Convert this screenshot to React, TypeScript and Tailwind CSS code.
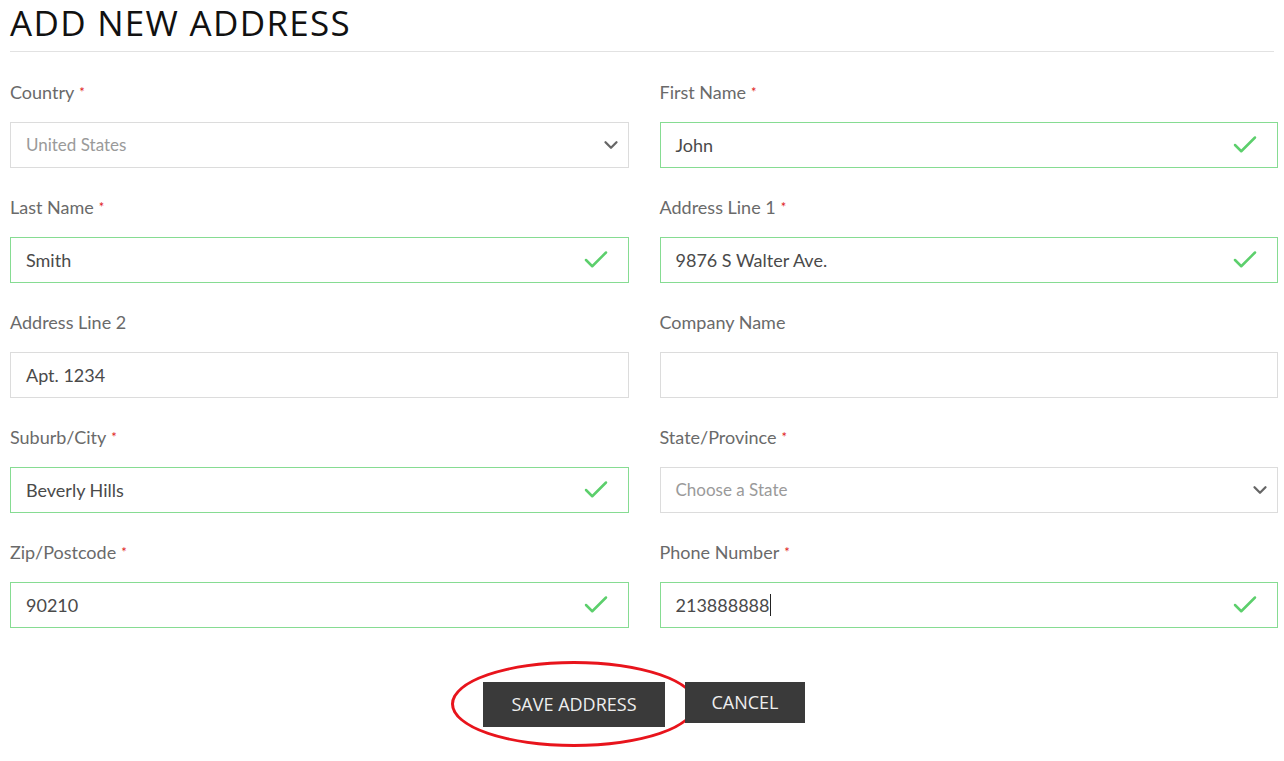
import React from 'react';
import { Check, ChevronDown } from 'lucide-react';

interface FieldDef {
  label: string;
  required?: boolean;
  value?: string;
  placeholder?: string;
  kind: 'text' | 'select';
  valid?: boolean;
  caret?: boolean;
}

const fields: FieldDef[] = [
  { label: 'Country', required: true, kind: 'select', placeholder: 'United States' },
  { label: 'First Name', required: true, kind: 'text', value: 'John', valid: true },
  { label: 'Last Name', required: true, kind: 'text', value: 'Smith', valid: true },
  { label: 'Address Line 1', required: true, kind: 'text', value: '9876 S Walter Ave.', valid: true },
  { label: 'Address Line 2', kind: 'text', value: 'Apt. 1234' },
  { label: 'Company Name', kind: 'text', value: '' },
  { label: 'Suburb/City', required: true, kind: 'text', value: 'Beverly Hills', valid: true },
  { label: 'State/Province', required: true, kind: 'select', placeholder: 'Choose a State' },
  { label: 'Zip/Postcode', required: true, kind: 'text', value: '90210', valid: true },
  { label: 'Phone Number', required: true, kind: 'text', value: '213888888', valid: true, caret: true },
];

function Field({ f }: { f: FieldDef }) {
  const border = f.valid ? 'border-[#86dc92]' : 'border-[#dcdcdc]';
  return (
    <div className="flex flex-col">
      <label className="h-[24px] mb-[18px] text-[18px] leading-[24px] text-[#6a6a6a] font-['Lato',sans-serif]">
        {f.label}
        {f.required && <span className="text-[#e02020] text-[13px] ml-[5px] align-top">*</span>}
      </label>
      <div className={`h-[46px] border ${border} bg-white flex items-center pl-[15px] pr-[6px]`}>
        {f.kind === 'select' ? (
          <>
            <span className="flex-1 text-[17px] text-[#9a9a9a] font-['Lato',sans-serif]">{f.placeholder}</span>
            <ChevronDown size={22} strokeWidth={2.5} className="text-[#666]" />
          </>
        ) : (
          <>
            <span className="flex-1 flex items-center text-[18px] text-[#4a4a4a] font-['Lato',sans-serif]">
              {f.value}
              {f.caret && <span className="inline-block w-px h-[22px] bg-[#222] ml-px" />}
            </span>
            {f.valid && <Check size={30} strokeWidth={2} className="text-[#5ccf6c] mr-[11px]" />}
          </>
        )}
      </div>
    </div>
  );
}

export default function App() {
  return (
    <div className="w-[1284px] h-[761px] bg-white px-[10px] overflow-hidden">
      <div className="h-[52px] border-b border-[#e2e2e2]">
        <h1 className="text-[35px] leading-[46px] text-[#111] tracking-[1.3px] font-['Open_Sans',sans-serif]">
          ADD NEW ADDRESS
        </h1>
      </div>
      <div className="grid grid-cols-2 gap-x-[31px] gap-y-[27px] w-[1268px] mt-[28px]">
        {fields.map((f) => (
          <Field key={f.label} f={f} />
        ))}
      </div>
      <div className="flex justify-center items-start gap-[20px] mt-[54px] pl-[4px] relative">
        <div className="relative">
          <div className="absolute left-[-32px] top-[-21px] w-[246px] h-[86px] rounded-[50%] border-[3px] border-[#e8141c]" />
          <button className="relative w-[182px] h-[45px] bg-[#3a3a3a] text-[#eee] text-[18px] font-['Open_Sans',sans-serif]">
            SAVE ADDRESS
          </button>
        </div>
        <button className="relative w-[120px] h-[41px] bg-[#3a3a3a] text-[#eee] text-[18px] font-['Open_Sans',sans-serif]">
          CANCEL
        </button>
      </div>
    </div>
  );
}
